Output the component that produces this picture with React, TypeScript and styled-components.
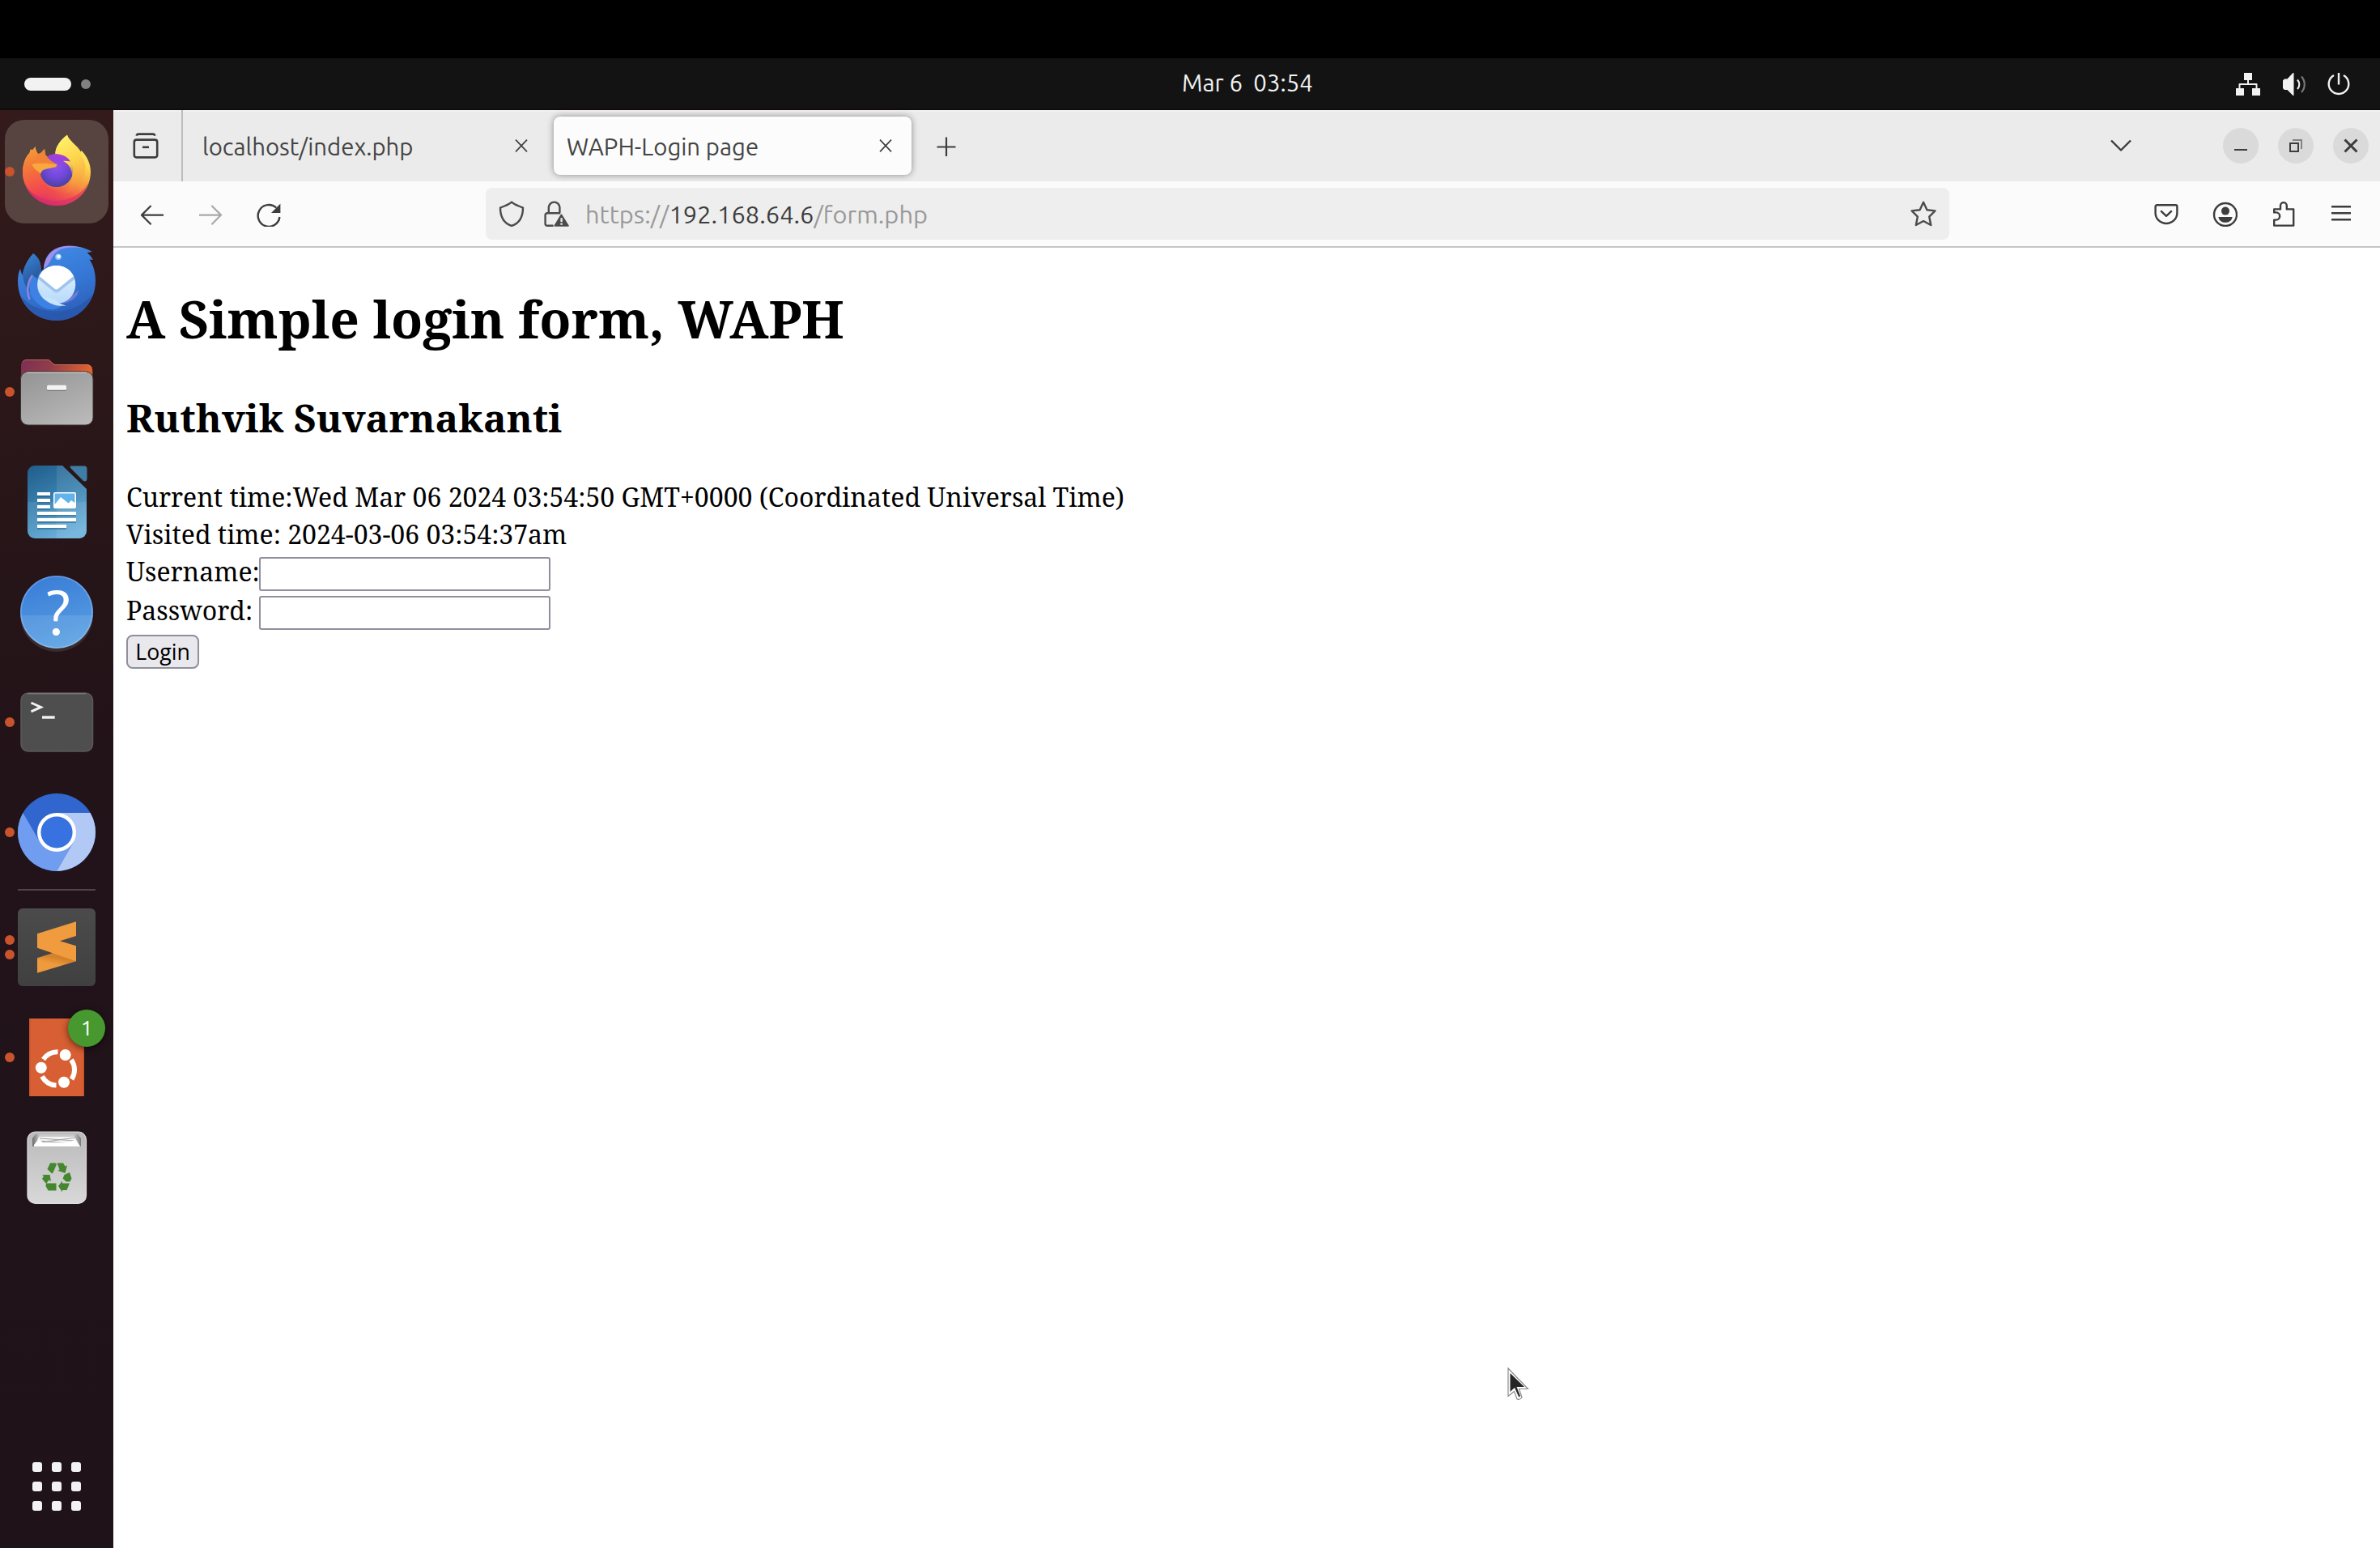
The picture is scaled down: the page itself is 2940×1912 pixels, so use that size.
import React from "react";
import styled, { createGlobalStyle } from "styled-components";

const UI_FONT = `Ubuntu, "Noto Sans", "Open Sans", sans-serif`;
const PAGE_FONT = `"Noto Serif", "DejaVu Serif Condensed", serif`;

const GlobalStyle = createGlobalStyle`
  *, *::before, *::after { box-sizing: border-box; }
  html, body { margin: 0; background: #000; }
`;

const Screen = styled.div`
  position: relative;
  display: flex;
  flex-direction: column;
  width: 2940px;
  height: 1912px;
  padding-top: 72px;
  overflow: hidden;
  background: #000;
  font-family: ${UI_FONT};
`;

/* ---------- GNOME top bar ---------- */

const TopBar = styled.header`
  display: grid;
  grid-template-columns: 1460px auto 1fr;
  align-items: center;
  height: 64px;
  flex: none;
  background: #131313;
  border-bottom: 2px solid #120b10;
`;

const Workspaces = styled.div`
  display: flex;
  align-items: center;
  gap: 12px;
  padding: 2px 0 0 30px;
`;

const WorkspaceMark = styled.span<{ $active?: boolean }>`
  width: ${(p) => (p.$active ? 58 : 12)}px;
  height: ${(p) => (p.$active ? 16 : 12)}px;
  border-radius: 8px;
  background: ${(p) => (p.$active ? "#f2f2f2" : "#828282")};
`;

const Clock = styled.time`
  font-size: 29.33px;
  line-height: 34px;
  white-space: pre;
  color: #f2f2f2;
`;

const StatusArea = styled.div`
  display: flex;
  justify-content: flex-end;
  gap: 24px;
  padding: 2px 35px 0 0;
  color: #f2f2f2;
`;

/* ---------- Desktop ---------- */

const Desktop = styled.div`
  display: flex;
  flex: 1;
  min-height: 0;
`;

const Dock = styled.nav`
  display: flex;
  flex-direction: column;
  flex: none;
  width: 140px;
  padding: 8px 0 28px;
  background: linear-gradient(172deg, #341a1b 0%, #2d1819 16%, #251418 34%, #211319 52%, #1f1219 100%);
`;

const DockItem = styled.div<{ $focused?: boolean }>`
  position: relative;
  display: flex;
  align-items: center;
  gap: 4px;
  flex: none;
  width: 128px;
  height: 128px;
  margin: 4px 6px;
  border-radius: 24px;
  background: ${(p) => (p.$focused ? "#574441" : "transparent")};
`;

const Indicators = styled.div`
  display: flex;
  flex-direction: column;
  gap: 6px;
  width: 12px;
`;

const Indicator = styled.span`
  width: 12px;
  height: 12px;
  border-radius: 50%;
  background: #c9532c;
`;

const DockSeparator = styled.hr`
  width: 96px;
  height: 2px;
  margin: 2px 22px;
  border: 0;
  flex: none;
  background: #4d4549;
`;

const Badge = styled.span`
  position: absolute;
  top: 5px;
  left: 78px;
  display: grid;
  place-items: center;
  width: 46px;
  height: 46px;
  border-radius: 50%;
  background: #47992f;
  box-shadow: 0 2px 8px rgba(0, 0, 0, 0.6);
  color: #fff;
  font-size: 26px;
  line-height: 30px;
`;

const AppsButton = styled.div`
  display: grid;
  grid-template-columns: repeat(3, 12px);
  gap: 12px;
  margin: auto 0 18px 40px;
`;

const AppsDot = styled.span`
  width: 12px;
  height: 12px;
  border-radius: 3px;
  background: #f2f2f2;
`;

/* ---------- Browser window ---------- */

const Browser = styled.main`
  display: flex;
  flex-direction: column;
  flex: 1;
  background: #fff;
`;

const TabStrip = styled.div`
  display: flex;
  align-items: center;
  flex: none;
  height: 88px;
  padding-right: 14px;
  background: #ebebeb;
  box-shadow: inset 0 2px 0 #f1f1f1;
  color: #3d3d3d;
`;

const ViewButton = styled.div`
  display: grid;
  place-items: center;
  align-self: stretch;
  width: 86px;
  padding-right: 4px;
  border-right: 2px solid #bcbcbc;
`;

const Tab = styled.div<{ $active?: boolean }>`
  display: flex;
  align-items: center;
  justify-content: space-between;
  width: ${(p) => (p.$active ? 442 : 458)}px;
  height: 72px;
  padding: ${(p) => (p.$active ? "0 24px 0 16px" : "0 32px 0 24px")};
  border-radius: 8px;
  background: ${(p) => (p.$active ? "#fcfcfc" : "transparent")};
  box-shadow: ${(p) => (p.$active ? "0 0 8px rgba(0, 0, 0, 0.42)" : "none")};
`;

const TabTitle = styled.span`
  padding-top: 4px;
  font-size: 29.33px;
  line-height: 34px;
  color: #444;
`;

const NewTab = styled.div`
  display: flex;
  flex: 1;
  padding: 2px 0 0 31px;
`;

const ListTabs = styled.div`
  display: flex;
  margin-right: 113px;
`;

const WindowButtons = styled.div`
  display: flex;
  gap: 24px;
`;

const WindowButton = styled.div`
  display: grid;
  place-items: center;
  width: 44px;
  height: 44px;
  border-radius: 50%;
  background: #dadada;
`;

const Toolbar = styled.div`
  display: flex;
  align-items: center;
  gap: 252px;
  flex: none;
  height: 82px;
  padding: 0 32px;
  background: #fbfbfb;
  border-bottom: 2px solid #c6c6c8;
  color: #3d3d3d;
`;

const ToolGroup = styled.div`
  display: flex;
  gap: 40px;
`;

const UrlBar = styled.div`
  display: flex;
  align-items: center;
  flex: 1;
  height: 64px;
  padding: 0 16px;
  border-radius: 8px;
  background: #eeeeee;
  color: #4b4b4b;
`;

const UrlIcons = styled.div`
  display: flex;
  gap: 24px;
`;

const Url = styled.span`
  flex: 1;
  padding: 2px 0 0 19px;
  font-size: 30.8px;
  line-height: 36px;
  color: #999;
`;

const Host = styled.span`
  color: #3d3d3d;
`;

/* ---------- Web page ---------- */

const Page = styled.section`
  flex: 1;
  padding: 44px 16px 0;
  font-family: ${PAGE_FONT};
  font-size: 32px;
  line-height: 46px;
  color: #000;
`;

const Title = styled.h1`
  margin: 0 0 45px;
  font-size: 64px;
  line-height: 88px;
  font-weight: 700;
`;

const Subtitle = styled.h2`
  margin: 0 0 42px;
  font-size: 48px;
  line-height: 66px;
  font-weight: 700;
`;

const Line = styled.div`
  white-space: nowrap;
`;

const Field = styled.label`
  display: flex;
  height: 48px;
`;

const FieldName = styled.span`
  width: 164px;
`;

const Input = styled.input`
  width: 360px;
  height: 42px;
  margin: 5px 0 0;
  padding: 2px 4px;
  border: 2px solid #8f8f9d;
  border-radius: 3px;
  background: #fff;
  outline: none;
`;

const LoginButton = styled.button`
  display: block;
  width: 90px;
  height: 42px;
  margin: 5px 0 0;
  padding: 0;
  border: 2px solid #8f8f9d;
  border-radius: 8px;
  background: #e9e9ed;
  color: #000;
  font: 26.67px/36px "Open Sans", "Noto Sans", sans-serif;
`;

const Pointer = styled.svg`
  position: absolute;
  left: 1859px;
  top: 1686px;
`;

/* ---------- Small line icons ---------- */

function Icon({ size = 32, box = 16, width = 1.1, children }: {
  size?: number; box?: number; width?: number; children: React.ReactNode;
}) {
  return (
    <svg width={size} height={size} viewBox={`0 0 ${box} ${box}`} fill="none"
      stroke="currentColor" strokeWidth={width} strokeLinejoin="round" display="block">
      {children}
    </svg>
  );
}

const CloseX = () => <Icon size={16} width={1.6}><path d="M1 .6 15 15.4M15 .6 1 15.4" /></Icon>;

/* ---------- Dock icons, each on a 96 x 96 grid ---------- */

function DockSvg({ children }: { children: React.ReactNode }) {
  return <svg width={96} height={96} viewBox="0 0 96 96" overflow="visible">{children}</svg>;
}

const FirefoxIcon = () => (
  <DockSvg>
    <defs>
      <linearGradient id="fxBody" x1="0.72" y1="0.05" x2="0.35" y2="1">
        <stop offset="0" stopColor="#fff36b" />
        <stop offset="0.32" stopColor="#fbd04a" />
        <stop offset="0.55" stopColor="#f79a3e" />
        <stop offset="0.76" stopColor="#f2574a" />
        <stop offset="1" stopColor="#d92a6e" />
      </linearGradient>
      <linearGradient id="fxLeft" x1="0.3" y1="0" x2="0.6" y2="1">
        <stop offset="0" stopColor="#f59a33" />
        <stop offset="0.4" stopColor="#f4703c" />
        <stop offset="0.75" stopColor="#f44b4e" />
        <stop offset="1" stopColor="#ee4150" stopOpacity="0" />
      </linearGradient>
      <radialGradient id="fxGlobe" cx="0.5" cy="0.4" r="0.65">
        <stop offset="0" stopColor="#8a55ee" />
        <stop offset="0.5" stopColor="#7048d8" />
        <stop offset="1" stopColor="#43409a" />
      </radialGradient>
      <linearGradient id="fxGlobeTop" x1="0.6" y1="0" x2="0.4" y2="1">
        <stop offset="0" stopColor="#b73bda" />
        <stop offset="0.45" stopColor="#9a45e0" stopOpacity="0" />
      </linearGradient>
      <linearGradient id="fxFlame" x1="0.3" y1="0" x2="0.6" y2="1">
        <stop offset="0" stopColor="#fff36b" />
        <stop offset="0.5" stopColor="#fcd24a" />
        <stop offset="1" stopColor="#f5853d" stopOpacity="0" />
      </linearGradient>
    </defs>
    <path fill="url(#fxBody)" d="M61 2.7C63 10 74 16 78 24L78.5 22C85 28 90 38 90 48C90 72 71 90 48 90C25 90 6 72 6 49C6 38 10 29 14.5 25L16 20.5L18 21.5L21.7 17.3C22 21 23 24 25 26C27.5 26.4 29.5 24 33 20C33.5 23 33.6 26 34.5 28C38 31 42 31 46.3 26C46.5 16 54 8 61 2.7Z" />
    <path fill="url(#fxLeft)" d="M14.5 25L16 20.5L18 21.5L21.7 17.3C22 21 23 24 25 26L36 40L30 50C30 64 44 76 60 74C54 84 36 84 24 78C12 72 6 61 6 49C6 38 10 29 14.5 25Z" />
    <path fill="#d92a6e" opacity="0.55" d="M9 64C22 88 68 94 87 62C82 80 66 90 48 90C30 90 15 80 9 64Z" />
    <circle cx="47.8" cy="46.5" r="20.5" fill="url(#fxGlobe)" />
    <circle cx="47.8" cy="46.5" r="20.5" fill="url(#fxGlobeTop)" />
    <path fill="url(#fxFlame)" d="M46.3 26C46.5 16 54 8 61 2.7C63 10 74 16 78 24C84 34 86 50 78 62C73 70 66 74 58 75C65 69 68.5 58 66.5 48C65 42 62 38 56 35C59 34.6 62 34.8 65 35.5C62 29.5 54 26 46.3 26Z" />
    <path fill="#ffe15a" opacity="0.7" d="M78.5 22C85 30 88 38 88 47C85 40 81 32 76 26Z" />
    <path fill="#f28238" d="M25 26C27.5 26.4 29.5 24 33 20C33.5 23 33.6 26 34.5 28C38 32 42 36 48.5 39L47 42.5L30 44L20 38Z" />
    <path fill="#f9a83e" d="M17.3 39C26 37 38 38 48.5 39.3C48 43 42 43.5 36 44.5C31 45.5 29 47.5 28.2 51C25 47 19.5 45 17.3 39Z" />
  </DockSvg>
);

const ThunderbirdIcon = () => (
  <DockSvg>
    <defs>
      <linearGradient id="tbBody" x1="0.3" y1="0" x2="0.6" y2="1">
        <stop offset="0" stopColor="#3f8be6" />
        <stop offset="0.55" stopColor="#3575d3" />
        <stop offset="1" stopColor="#2b5db8" />
      </linearGradient>
      <linearGradient id="tbMail" x1="0" y1="0" x2="0" y2="1">
        <stop offset="0" stopColor="#e6f3fe" />
        <stop offset="1" stopColor="#b5dafa" />
      </linearGradient>
      <linearGradient id="tbTail" x1="0" y1="0" x2="0.3" y2="1">
        <stop offset="0" stopColor="#3b86df" />
        <stop offset="1" stopColor="#20477f" />
      </linearGradient>
    </defs>
    <path fill="url(#tbBody)" d="M61 3.8C70 3 82 5 92 11L85.5 12C88 14 91 17 93 21L88.5 20.5C94 28 96 38 96 47C96 75 74 96 48 96C20 96 0 75 0 47C0 41 1 36 3.2 31.7C3.6 35 4.6 38 6 40C7 30 12 21 19 13.3C26 18 29 25 28.7 35L32 32C33 14 44 4.5 61 3.8Z" />
    <path fill="url(#tbTail)" d="M19 13.3C26 18 29 25 28.7 35C22 42 22 56 28 68C14 64 7 52 6 40C7 30 12 21 19 13.3Z" />
    <path fill="#2856a8" opacity="0.7" d="M4 66C24 90 68 92 92 64C86 84 68 96 48 96C28 96 11 84 4 66Z" />
    <path fill="#3d82e2" d="M18 40C10 52 14 70 32 80C42 84 50 82 54 78C34 76 22 60 24 44Z" />
    <path fill="none" stroke="#8f84dd" strokeWidth="2.5" d="M18 40C11 50 11 60 14.5 70" />
    <path fill="#a08fec" d="M32 32C33 16 44 5 61 3.8C68 3.2 76 4.5 82 7C70 4.8 60 5 51 9C41 14 42 25 32 32Z" />
    <path fill="#7f80dc" opacity="0.8" d="M44 71C56 72 66 68 75 58C75 68 62 77 48 74Z" />
    <circle cx="47.7" cy="51.5" r="23.6" fill="url(#tbMail)" />
    <path fill="#c9e3fa" d="M30 66C38 76 48 79 60 77.5C54 76 49 74 47 70Z" />
    <path fill="#9ec4ee" d="M25 44.5L45 60.5Q47.7 62.5 50.5 60.5L70.5 44.5L68 40H27Z" />
    <path fill="#fff" d="M26.5 41C30 33 38 28 47.7 28S65 33 69 41L50 56.5Q47.7 58.5 45.4 56.5Z" />
    <circle cx="50" cy="17.2" r="3.8" fill="#8cc4fb" />
    <circle cx="50.5" cy="16.8" r="2.3" fill="#fff" />
  </DockSvg>
);

const FilesIcon = () => (
  <DockSvg>
    <defs>
      <linearGradient id="flBack" x1="0" y1="0" x2="1" y2="0.2">
        <stop offset="0" stopColor="#7b2f52" />
        <stop offset="0.45" stopColor="#923d4b" />
        <stop offset="1" stopColor="#e0632f" />
      </linearGradient>
      <linearGradient id="flFront" x1="0.2" y1="0" x2="0.8" y2="1">
        <stop offset="0" stopColor="#969696" />
        <stop offset="1" stopColor="#b9b9b9" />
      </linearGradient>
    </defs>
    <path fill="url(#flBack)" d="M4 40V15A7 7 0 0 1 11 8H37C41 8 42 14 47 14H85A7 7 0 0 1 92.3 21V40Z" />
    <path fill="none" stroke="#e08a62" strokeOpacity="0.6" d="M6 11C8 9 9 8.5 11 8.5H37C41 8.5 42 14.5 47 14.5H85C88 14.5 90 16 91.5 18" />
    <rect x="3.5" y="23" width="89.5" height="66" rx="9" fill="url(#flFront)" stroke="#3a3535" strokeWidth="1" />
    <path stroke="#c9c9c9" strokeWidth="1.2" d="M11 24.3H85" />
    <rect x="36" y="41" width="24" height="6" rx="1.5" fill="#777" />
    <rect x="36" y="39.7" width="24" height="6" rx="1.5" fill="#f3f3f3" />
  </DockSvg>
);

const WriterIcon = () => (
  <DockSvg>
    <defs>
      <linearGradient id="wrPage" x1="0.2" y1="0" x2="0.6" y2="1">
        <stop offset="0" stopColor="#24618f" />
        <stop offset="0.55" stopColor="#3c86b4" />
        <stop offset="1" stopColor="#5da9d8" />
      </linearGradient>
    </defs>
    <path fill="url(#wrPage)" d="M21 3H55L85 32V84A9 9 0 0 1 76 93H21A9 9 0 0 1 12 84V12A9 9 0 0 1 21 3Z" />
    <path fill="#fff" opacity="0.09" d="M48 3H55L85 32V84A9 9 0 0 1 76 93H48Z" />
    <path fill="#fff" opacity="0.09" d="M12 48H85V84A9 9 0 0 1 76 93H21A9 9 0 0 1 12 84Z" />
    <path fill="#3f7da6" d="M66 3.5H82A3.5 3.5 0 0 1 85.5 7V19C85.5 23 82.5 23.5 80 21L66 7C64 5 64 3.5 66 3.5Z" />
    <g fill="#1d5b85" opacity="0.5">
      <path d="M24 38h16v4H24zM24 46h16v4H24zM24 54h16v4H24zM24 62h48v4H24zM24 70h48v4H24zM24 78h36v4H24z" />
    </g>
    <g fill="#fff">
      <path d="M24 36h16v4H24zM24 44h16v4H24zM24 52h16v4H24zM24 60h48v4H24zM24 68h48v4H24zM24 76h36v4H24z" />
      <rect x="44" y="36" width="28" height="20" rx="2" />
    </g>
    <path fill="#62b3ea" d="M45.6 37.6H70.4V49L66 46L62.5 49.5L53 42L45.6 51Z" />
  </DockSvg>
);

const HelpIcon = () => (
  <DockSvg>
    <defs>
      <linearGradient id="hpDisc" x1="0.3" y1="0" x2="0.6" y2="1">
        <stop offset="0" stopColor="#3b7dd8" />
        <stop offset="1" stopColor="#57a0e2" />
      </linearGradient>
    </defs>
    <circle cx="48" cy="48" r="45" fill="url(#hpDisc)" />
    <path fill="#fff" opacity="0.1" d="M3 52H93A45 45 0 0 1 3 52Z" />
    <circle cx="48" cy="48" r="44" fill="none" stroke="#fff" strokeOpacity="0.2" strokeWidth="1.5" />
    <text x="50" y="76" textAnchor="middle" fontFamily={UI_FONT} fontSize="77" fill="#fff">?</text>
  </DockSvg>
);

const TerminalIcon = () => (
  <DockSvg>
    <rect x="4" y="12" width="88.5" height="72" rx="9" fill="#4e4e4e" stroke="#5a5a5a" strokeWidth="1.5" />
    <path stroke="#747474" strokeWidth="1.5" d="M12 12.7H84" />
    <path fill="none" stroke="#f2f2f2" strokeWidth="3" d="M16.5 24L28.5 29.4L16.5 34.8" />
    <path stroke="#f2f2f2" strokeWidth="3.4" d="M30 42H45.7" />
  </DockSvg>
);

const ChromiumIcon = () => (
  <DockSvg>
    <circle cx="48" cy="48" r="48" fill="#3166cf" />
    <path fill="#b2c9f6" d="M48 24H89.6A48 48 0 0 1 48 96L68.8 60Z" />
    <path fill="#719df1" d="M6.4 24L27.2 60L48 48L68.8 60L48 96A48 48 0 0 1 6.4 24Z" />
    <circle cx="48" cy="48" r="24" fill="#fff" />
    <circle cx="48" cy="48" r="19.6" fill="#3872e0" />
  </DockSvg>
);

const SublimeIcon = () => (
  <DockSvg>
    <defs>
      <linearGradient id="sbTile" x1="0" y1="0" x2="0" y2="1">
        <stop offset="0" stopColor="#4b4b4b" />
        <stop offset="1" stopColor="#404040" />
      </linearGradient>
      <linearGradient id="sbFold" x1="0.7" y1="0" x2="0.3" y2="1">
        <stop offset="0.35" stopColor="#d3812b" />
        <stop offset="0.65" stopColor="#ef9a3d" />
      </linearGradient>
    </defs>
    <rect width="96" height="96" rx="6" fill="url(#sbTile)" />
    <path fill="url(#sbFold)" d="M24 61.3L56 51L72 65.3L24 79.7Z" />
    <path fill="#f09b3e" d="M72 16.3L24 31.3V48.7L72 65.3V46.3L52 40.3L72 34Z" />
  </DockSvg>
);

const UbuntuIcon = () => (
  <DockSvg>
    <rect x="14" y="0" width="68" height="96" fill="#d75f33" />
    <path fill="#c5532b" d="M14 0h1.5v96H14zM80.5 0H82v96h-1.5z" />
    <g fill="#fff">
      <circle cx="28.8" cy="60.7" r="7" />
      <circle cx="58.7" cy="45" r="7" />
      <circle cx="57" cy="78.7" r="7" />
    </g>
    <g fill="none" stroke="#fff" strokeWidth="6">
      <path d="M31.5 50.5A21 21 0 0 1 49.5 41.2" />
      <path d="M66 51A21 21 0 0 1 66.5 75" />
      <path d="M30 71.5A21 21 0 0 0 47.5 82.5" />
    </g>
  </DockSvg>
);

const TrashIcon = () => (
  <DockSvg>
    <defs>
      <linearGradient id="trBin" x1="0" y1="0" x2="0" y2="1">
        <stop offset="0" stopColor="#bababa" />
        <stop offset="1" stopColor="#d8d8d8" />
      </linearGradient>
      <linearGradient id="trSlot" x1="0" y1="0" x2="1" y2="0">
        <stop offset="0" stopColor="#6d6d6d" />
        <stop offset="0.15" stopColor="#c9c9c9" />
        <stop offset="0.85" stopColor="#c9c9c9" />
        <stop offset="1" stopColor="#7a7a7a" />
      </linearGradient>
    </defs>
    <rect x="12" y="4" width="72.5" height="88.5" rx="10" fill="url(#trBin)" stroke="#dedede" strokeWidth="1.2" />
    <path fill="url(#trSlot)" d="M22 7H74L78 12V22H18V12Z" />
    <path fill="#f4f4f4" d="M26 10H70L77 22H20.5Z" />
    <path fill="none" stroke="#a5a5a5" d="M27 12L70 15M28 17L72 11M24 15L72 19" />
    <path fill="#fff" d="M20 20L26 13L32 18L64 17L70 14L77 22H20Z" />
    <g fill="#45872f">
      <path d="M36.5 50L40 42.5H46.5L48 44L43.5 54.5L42 55.5Z" />
      <path d="M48.5 42.5H56L58.5 46.5L61 45.5L58.5 55L49.5 52L51.5 50.5Z" />
      <path d="M57.5 57L64 54L66.5 61.5L64.5 65.5H59.5L55.5 61.5Z" />
      <path d="M50 71L55 64.5V67.5H64L60.5 76H55V78.5Z" />
      <path d="M47.5 67.5V76.5H37.5L34.5 71L35 67.5Z" />
      <path d="M30 57H39.5L41 65L38.5 63.5L35 68L30 62L32 58.5Z" />
    </g>
  </DockSvg>
);

const apps: { name: string; icon: React.ReactNode; windows: number; focused?: boolean; badge?: number; separated?: boolean }[] = [
  { name: "firefox", icon: <FirefoxIcon />, windows: 1, focused: true },
  { name: "thunderbird", icon: <ThunderbirdIcon />, windows: 0 },
  { name: "files", icon: <FilesIcon />, windows: 1 },
  { name: "writer", icon: <WriterIcon />, windows: 0 },
  { name: "help", icon: <HelpIcon />, windows: 0 },
  { name: "terminal", icon: <TerminalIcon />, windows: 1 },
  { name: "chromium", icon: <ChromiumIcon />, windows: 1 },
  { name: "sublime", icon: <SublimeIcon />, windows: 2, separated: true },
  { name: "ubuntu", icon: <UbuntuIcon />, windows: 1, badge: 1 },
  { name: "trash", icon: <TrashIcon />, windows: 0 },
];

export default function App() {
  return (
    <Screen>
      <GlobalStyle />
      <TopBar>
        <Workspaces>
          <WorkspaceMark $active />
          <WorkspaceMark />
        </Workspaces>
        <Clock>{"Mar 6  03:54"}</Clock>
        <StatusArea>
          <Icon box={32} width={2}>
            <path fill="currentColor" stroke="none" d="M11 2h10v9H11zM1 21h10v9H1zM21 21h10v9H21z" />
            <path d="M16 10v6M5.5 22v-6h21v6" />
          </Icon>
          <Icon box={32} width={2.2}>
            <path fill="currentColor" stroke="none" d="M3 11.5L5 9.5H8.5L15.5 2H16.5V30H15.5L8.5 23H5L3 21Z" />
            <path d="M21 10.5C24 14 24 18.500 21 22" />
            <path opacity="0.45" d="M26 6.500C31 12 31 20.500 26 26" />
          </Icon>
          <Icon box={32} width={2.4}>
            <path d="M10 5A12.3 12.3 0 1 0 22 5M16 2V16.5" />
          </Icon>
        </StatusArea>
      </TopBar>

      <Desktop>
        <Dock>
          {apps.map((app) => (
            <React.Fragment key={app.name}>
              {app.separated && <DockSeparator />}
              <DockItem $focused={app.focused}>
                <Indicators>
                  {Array.from({ length: app.windows }, (_, i) => <Indicator key={i} />)}
                </Indicators>
                {app.icon}
                {app.badge && <Badge>{app.badge}</Badge>}
              </DockItem>
            </React.Fragment>
          ))}
          <AppsButton>
            {Array.from({ length: 9 }, (_, i) => <AppsDot key={i} />)}
          </AppsButton>
        </Dock>

        <Browser>
          <TabStrip>
            <ViewButton>
              <Icon width={1.3}>
                <path d="M2.3 1.8C2.5 1 3 .8 3.6 .8H12.4C13 .8 13.5 1 13.7 1.8" />
                <rect x=".9" y="4.3" width="14.2" height="10.9" rx="1.4" />
                <path d="M6 8.9H10" />
              </Icon>
            </ViewButton>
            <Tab>
              <TabTitle>localhost/index.php</TabTitle>
              <CloseX />
            </Tab>
            <Tab $active>
              <TabTitle>WAPH-Login page</TabTitle>
              <CloseX />
            </Tab>
            <NewTab>
              <Icon size={24} box={24} width={2.2}><path d="M.5 12.5H23.5M12 .5V24" /></Icon>
            </NewTab>
            <ListTabs>
              <Icon size={26} box={26} width={2.4}><path d="M1 6.5L13 18.5L25 6.5" /></Icon>
            </ListTabs>
            <WindowButtons>
              <WindowButton>
                <Icon box={32} width={2}><path d="M8 21H24" /></Icon>
              </WindowButton>
              <WindowButton>
                <Icon box={32} width={2}>
                  <path strokeLinejoin="miter" d="M9 13H19V23H9Z" />
                  <path strokeLinejoin="miter" opacity="0.55" d="M12 9H23V20" />
                </Icon>
              </WindowButton>
              <WindowButton>
                <Icon box={32} width={3}><path d="M8.5 8.5L23.5 23.5M23.5 8.5L8.5 23.5" /></Icon>
              </WindowButton>
            </WindowButtons>
          </TabStrip>

          <Toolbar>
            <ToolGroup>
              <Icon><path d="M15 8.8H1.5M7.3 3L1.5 8.8L7.3 14.6" /></Icon>
              <svg width={32} height={32} viewBox="0 0 16 16" fill="none" stroke="#a9a9a9" strokeWidth={1.1}>
                <path d="M1 8.8H14.5M8.7 3L14.5 8.8L8.7 14.6" />
              </svg>
              <Icon width={1.2}>
                <path d="M12.6 4.3A6.7 6.7 0 1 0 14.7 10" />
                <path fill="currentColor" stroke="none" d="M15.2 1.8V7.5H9.5Z" />
              </Icon>
            </ToolGroup>
            <UrlBar>
              <UrlIcons>
                <Icon width={1.2}>
                  <path d="M8 .8C10 2.6 12.5 3.2 15 4.3C15 9.8 12.7 14 8 15.5C3.3 14 1 9.8 1 4.3C3.5 3.2 6 2.6 8 .8Z" />
                </Icon>
                <Icon width={1.2}>
                  <path d="M2.9 7.6V4.2A3.4 3.4 0 0 1 9.7 4.2V7.6" />
                  <path d="M5.8 15.4H2A1.2 1.2 0 0 1 .8 14.2V8.8A1.2 1.2 0 0 1 2 7.6H10" />
                  <path fill="currentColor" strokeWidth=".8" d="M10.7 8.6L15 15.5H6.6Z" />
                  <path stroke="#eee" d="M10.8 10.6V13M10.8 13.7V14.9" />
                </Icon>
              </UrlIcons>
              <Url>https://<Host>192.168.64.6</Host>/form.php</Url>
              <Icon width={1.2}>
                <path d="M8 .9L10.2 5.6L15.2 6.2L11.6 9.8L12.6 15L8 12.5L3.4 15L4.4 9.8L.8 6.2L5.8 5.6Z" />
              </Icon>
            </UrlBar>
            <ToolGroup>
              <Icon width={1.2}>
                <path d="M2.2 2.6H13.8A.9 .9 0 0 1 14.7 3.5V7.5A6.7 6.5 0 0 1 1.3 7.5V3.5A.9 .9 0 0 1 2.2 2.6Z" />
                <path d="M4.6 6.2L8 9.4L11.4 6.2" />
              </Icon>
              <Icon width={1.2}>
                <circle cx="8.5" cy="8.5" r="7" />
                <circle cx="8.5" cy="6.3" r="2.5" fill="currentColor" stroke="none" />
                <path fill="currentColor" stroke="none" d="M4.2 10H12.8C12.5 12.3 10.8 13.4 8.5 13.4S4.5 12.3 4.2 10Z" />
              </Icon>
              <Icon width={1.2}>
                <path d="M2.6 7.2V5.2H6.5V3A1.95 1.95 0 0 1 10.4 3V5.2H14.6V15.3H2.6V11.8H3.8A2.3 2.3 0 0 0 3.8 7.2Z" />
              </Icon>
              <Icon width={1.2}><path d="M2 3.6H14M2 7.6H14M2 11.6H14" /></Icon>
            </ToolGroup>
          </Toolbar>

          <Page>
            <Title>A Simple login form, WAPH</Title>
            <Subtitle>Ruthvik Suvarnakanti</Subtitle>
            <Line>Current time:Wed Mar 06 2024 03:54:50 GMT+0000 (Coordinated Universal Time)</Line>
            <Line>Visited time: 2024-03-06 03:54:37am</Line>
            <Field>
              <FieldName>Username:</FieldName>
              <Input type="text" />
            </Field>
            <Field>
              <FieldName>Password:</FieldName>
              <Input type="password" />
            </Field>
            <LoginButton type="button">Login</LoginButton>
          </Page>
        </Browser>
      </Desktop>

      <Pointer width={34} height={46} viewBox="0 0 34 46">
        <path d="M4 4V38.5L11.5 32.5L15 42Q18.500 43.500 21 40L17.500 29.500H28.500Z" fill="#fff" stroke="#8a8a8a" strokeWidth="1.2" />
        <path d="M6.5 10V33L12 28L17.2 39.5L19 38.5L14.5 27H24Z" fill="#262626" />
      </Pointer>
    </Screen>
  );
}
